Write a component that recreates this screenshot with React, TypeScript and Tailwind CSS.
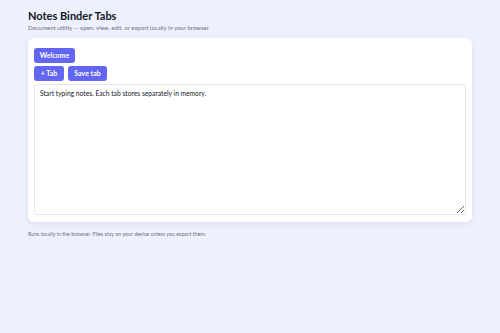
export default function App() {
  return (
    <div className="min-h-[333px] bg-[#eef1fd] px-[28px] pt-[9px]" style={{ fontFamily: 'Lato, "Noto Sans", sans-serif' }}>
      <h1 className="text-[11px] font-bold leading-[14px] text-[#111827]">Notes Binder Tabs</h1>
      <p className="mt-[1px] text-[6px] leading-[8px] text-[#6b7280]">
        Document utility — open, view, edit, or export locally in your browser
      </p>
      <div className="mt-[6px] w-[444px] rounded-[6px] bg-white px-[6px] pt-[10px] pb-[7px] shadow-[0_2px_6px_rgba(80,90,160,0.12)]">
        <div className="flex gap-[4px]">
          <button className="h-[15px] w-[41px] rounded-[3px] bg-[#6366f1] text-[7px] font-bold text-white">Welcome</button>
        </div>
        <div className="mt-[3px] flex gap-[4px]">
          <button className="h-[15px] w-[30px] rounded-[3px] bg-[#6366f1] text-[7px] font-bold text-white">+ Tab</button>
          <button className="h-[15px] w-[39px] rounded-[3px] bg-[#6366f1] text-[7px] font-bold text-white">Save tab</button>
        </div>
        <textarea
          className="mt-[3px] block h-[131px] w-full resize-y rounded-[3px] border border-[#e5e7eb] px-[5px] py-[4px] text-[6.7px] leading-[9px] text-[#111827] outline-none"
          style={{ fontFamily: 'Lato, "Noto Sans", sans-serif' }}
          defaultValue="Start typing notes. Each tab stores separately in memory."
        />
      </div>
      <p className="mt-[8px] text-[5.3px] leading-[8px] text-[#6b7280]">
        Runs locally in the browser. Files stay on your device unless you export them.
      </p>
    </div>
  )
}
